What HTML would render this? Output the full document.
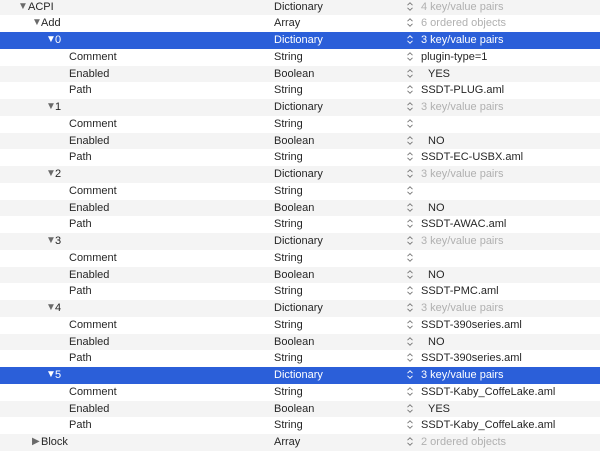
<!DOCTYPE html>
<html><head><style>
body{margin:0;width:600px;height:442px;overflow:hidden;background:#fff;font-family:"Liberation Sans",sans-serif;font-size:11px;color:#262626;position:relative}
.r{position:absolute;left:0;width:600px;height:16.75px;line-height:16.75px;white-space:nowrap}
.g{background:#f4f4f4}
.s{background:#2b5fd9;color:#fff}
.r>span{position:absolute;top:0}
.t{left:274px}
.a{left:407px;top:3px!important;width:6px;height:9px;line-height:0}
.a svg{display:block}
.v{left:421px}
.d{color:#b0b0b0}
.s .d{color:#fff}
.tri{font-size:10px;color:#6a6a6a}
.s .tri{color:#fff}
</style></head><body>
<svg width="0" height="0" style="position:absolute"><defs><symbol id="ud" viewBox="0 0 6 9"><path d="M0.5 3.2L3 0.8L5.5 3.2M0.5 5.8L3 8.2L5.5 5.8" fill="none" stroke="currentColor" stroke-width="0.9"/></symbol></defs></svg>
<div class="r g" style="top:-1.5px"><span style="left:18px" class="tri">▼</span><span style="left:28px">ACPI</span><span class="t">Dictionary</span><span class="a" style="color:#777"><svg width="6" height="9"><use href="#ud"/></svg></span><span class="v d">4 key/value pairs</span></div>
<div class="r" style="top:15.25px"><span style="left:32px" class="tri">▼</span><span style="left:41px">Add</span><span class="t">Array</span><span class="a" style="color:#777"><svg width="6" height="9"><use href="#ud"/></svg></span><span class="v d">6 ordered objects</span></div>
<div class="r s" style="top:32px"><span style="left:46px" class="tri">▼</span><span style="left:55px">0</span><span class="t">Dictionary</span><span class="a" style="color:#fff"><svg width="6" height="9"><use href="#ud"/></svg></span><span class="v">3 key/value pairs</span></div>
<div class="r" style="top:48.75px"><span style="left:69px">Comment</span><span class="t">String</span><span class="a" style="color:#777"><svg width="6" height="9"><use href="#ud"/></svg></span><span class="v">plugin-type=1</span></div>
<div class="r g" style="top:65.5px"><span style="left:69px">Enabled</span><span class="t">Boolean</span><span class="a" style="color:#777"><svg width="6" height="9"><use href="#ud"/></svg></span><span class="v" style="left:428px">YES</span></div>
<div class="r" style="top:82.25px"><span style="left:69px">Path</span><span class="t">String</span><span class="a" style="color:#777"><svg width="6" height="9"><use href="#ud"/></svg></span><span class="v">SSDT-PLUG.aml</span></div>
<div class="r g" style="top:99px"><span style="left:46px" class="tri">▼</span><span style="left:55px">1</span><span class="t">Dictionary</span><span class="a" style="color:#777"><svg width="6" height="9"><use href="#ud"/></svg></span><span class="v d">3 key/value pairs</span></div>
<div class="r" style="top:115.75px"><span style="left:69px">Comment</span><span class="t">String</span><span class="a" style="color:#777"><svg width="6" height="9"><use href="#ud"/></svg></span></div>
<div class="r g" style="top:132.5px"><span style="left:69px">Enabled</span><span class="t">Boolean</span><span class="a" style="color:#777"><svg width="6" height="9"><use href="#ud"/></svg></span><span class="v" style="left:428px">NO</span></div>
<div class="r" style="top:149.25px"><span style="left:69px">Path</span><span class="t">String</span><span class="a" style="color:#777"><svg width="6" height="9"><use href="#ud"/></svg></span><span class="v">SSDT-EC-USBX.aml</span></div>
<div class="r g" style="top:166px"><span style="left:46px" class="tri">▼</span><span style="left:55px">2</span><span class="t">Dictionary</span><span class="a" style="color:#777"><svg width="6" height="9"><use href="#ud"/></svg></span><span class="v d">3 key/value pairs</span></div>
<div class="r" style="top:182.75px"><span style="left:69px">Comment</span><span class="t">String</span><span class="a" style="color:#777"><svg width="6" height="9"><use href="#ud"/></svg></span></div>
<div class="r g" style="top:199.5px"><span style="left:69px">Enabled</span><span class="t">Boolean</span><span class="a" style="color:#777"><svg width="6" height="9"><use href="#ud"/></svg></span><span class="v" style="left:428px">NO</span></div>
<div class="r" style="top:216.25px"><span style="left:69px">Path</span><span class="t">String</span><span class="a" style="color:#777"><svg width="6" height="9"><use href="#ud"/></svg></span><span class="v">SSDT-AWAC.aml</span></div>
<div class="r g" style="top:233px"><span style="left:46px" class="tri">▼</span><span style="left:55px">3</span><span class="t">Dictionary</span><span class="a" style="color:#777"><svg width="6" height="9"><use href="#ud"/></svg></span><span class="v d">3 key/value pairs</span></div>
<div class="r" style="top:249.75px"><span style="left:69px">Comment</span><span class="t">String</span><span class="a" style="color:#777"><svg width="6" height="9"><use href="#ud"/></svg></span></div>
<div class="r g" style="top:266.5px"><span style="left:69px">Enabled</span><span class="t">Boolean</span><span class="a" style="color:#777"><svg width="6" height="9"><use href="#ud"/></svg></span><span class="v" style="left:428px">NO</span></div>
<div class="r" style="top:283.25px"><span style="left:69px">Path</span><span class="t">String</span><span class="a" style="color:#777"><svg width="6" height="9"><use href="#ud"/></svg></span><span class="v">SSDT-PMC.aml</span></div>
<div class="r g" style="top:300px"><span style="left:46px" class="tri">▼</span><span style="left:55px">4</span><span class="t">Dictionary</span><span class="a" style="color:#777"><svg width="6" height="9"><use href="#ud"/></svg></span><span class="v d">3 key/value pairs</span></div>
<div class="r" style="top:316.75px"><span style="left:69px">Comment</span><span class="t">String</span><span class="a" style="color:#777"><svg width="6" height="9"><use href="#ud"/></svg></span><span class="v">SSDT-390series.aml</span></div>
<div class="r g" style="top:333.5px"><span style="left:69px">Enabled</span><span class="t">Boolean</span><span class="a" style="color:#777"><svg width="6" height="9"><use href="#ud"/></svg></span><span class="v" style="left:428px">NO</span></div>
<div class="r" style="top:350.25px"><span style="left:69px">Path</span><span class="t">String</span><span class="a" style="color:#777"><svg width="6" height="9"><use href="#ud"/></svg></span><span class="v">SSDT-390series.aml</span></div>
<div class="r s" style="top:367px"><span style="left:46px" class="tri">▼</span><span style="left:55px">5</span><span class="t">Dictionary</span><span class="a" style="color:#fff"><svg width="6" height="9"><use href="#ud"/></svg></span><span class="v">3 key/value pairs</span></div>
<div class="r" style="top:383.75px"><span style="left:69px">Comment</span><span class="t">String</span><span class="a" style="color:#777"><svg width="6" height="9"><use href="#ud"/></svg></span><span class="v">SSDT-Kaby_CoffeLake.aml</span></div>
<div class="r g" style="top:400.5px"><span style="left:69px">Enabled</span><span class="t">Boolean</span><span class="a" style="color:#777"><svg width="6" height="9"><use href="#ud"/></svg></span><span class="v" style="left:428px">YES</span></div>
<div class="r" style="top:417.25px"><span style="left:69px">Path</span><span class="t">String</span><span class="a" style="color:#777"><svg width="6" height="9"><use href="#ud"/></svg></span><span class="v">SSDT-Kaby_CoffeLake.aml</span></div>
<div class="r g" style="top:434px"><span style="left:32px" class="tri">▶</span><span style="left:41px">Block</span><span class="t">Array</span><span class="a" style="color:#777"><svg width="6" height="9"><use href="#ud"/></svg></span><span class="v d">2 ordered objects</span></div>
</body></html>
